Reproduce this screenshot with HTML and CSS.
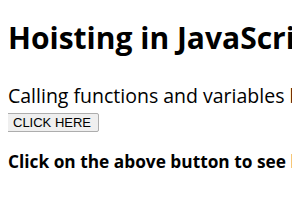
FILE: index.html
```html
<!DOCTYPE html>
<html lang="en">
<head>
  <meta charset="UTF-8" />
  <title>Hoisting in JavaScript</title>
  <link rel="stylesheet" href="styles.css">
</head>
<body>
  <h1>Hoisting in JavaScript</h1>
  <p class="intro">Calling functions and variables before declaring them</p>
  <button class="btn" onclick="show()">CLICK HERE</button>
  <h3 class="hint">Click on the above button to see hoisting in action</h3>
  <p id="result"></p>

  <script>
    function show() {
      document.getElementById("result").textContent = greet() + " " + x;
      function greet() { return "Hello"; }
      var x = 5;
    }
  </script>
</body>
</html>
```

FILE: styles.css
```css
body {
  margin: 8px;
  font-family: "Open Sans", sans-serif;
  color: #000;
  background: #fff;
  white-space: nowrap;
  overflow: hidden;
}

h1 {
  font-size: 30px;
  line-height: 36px;
  margin: 12px 0 0;
}

.intro {
  font-size: 19.5px;
  line-height: 24px;
  margin: 28px 0 0;
}

.btn {
  display: block;
  margin: 5px 0 0 -3px;
  font-family: "Liberation Sans", Arial, sans-serif;
  font-size: 13px;
  line-height: 15px;
  padding: 1px 7px;
  border: 1px solid #adadad;
  background: #efefef;
  border-radius: 2px;
  color: #000;
}

.hint {
  font-size: 17.3px;
  line-height: 22px;
  margin: 19px 0 0;
}
```
